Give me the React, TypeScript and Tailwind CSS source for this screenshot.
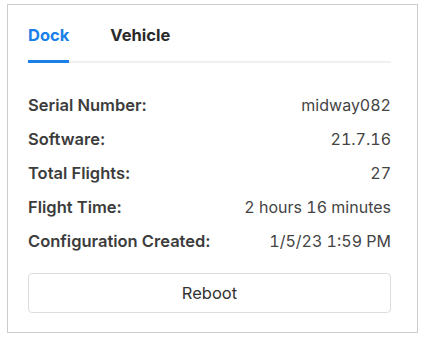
const rows: [string, string][] = [
  ["Serial Number:", "midway082"],
  ["Software:", "21.7.16"],
  ["Total Flights:", "27"],
  ["Flight Time:", "2 hours 16 minutes"],
  ["Configuration Created:", "1/5/23 1:59 PM"],
];

export default function App() {
  return (
    <div
      className="pt-[4px] pl-[7px] bg-white min-h-[340px]"
      style={{ fontFamily: "Inter, 'Liberation Sans', sans-serif" }}
    >
      <div className="w-[411px] border border-[#cccccc] bg-white pl-[20px] pr-[26px] pb-[19px]">
        <div className="flex gap-[41px] border-b-2 border-[#f0f0f0] pt-[18px]">
          <button className="-mb-[2px] border-b-[3px] border-[#1a7fe8] pb-[13px] text-[16.5px] leading-[24px] font-bold text-[#1a7fe8]">
            Dock
          </button>
          <button className="-mb-[2px] border-b-[3px] border-transparent pb-[13px] text-[16.5px] leading-[24px] font-bold text-[#2a2a2a]">
            Vehicle
          </button>
        </div>
        <div className="mt-[25px] flex flex-col">
          {rows.map(([label, value]) => (
            <div key={label} className="flex items-baseline justify-between leading-[34px]">
              <span className="text-[16.5px] font-semibold text-[#3c3c3c]">{label}</span>
              <span className="text-[16px] tabular-nums text-[#444444]">{value}</span>
            </div>
          ))}
        </div>
        <button className="mt-[15px] h-[40px] w-full rounded-[4px] border border-[#dddddd] bg-white text-[16.5px] text-[#333333]">
          Reboot
        </button>
      </div>
    </div>
  );
}
